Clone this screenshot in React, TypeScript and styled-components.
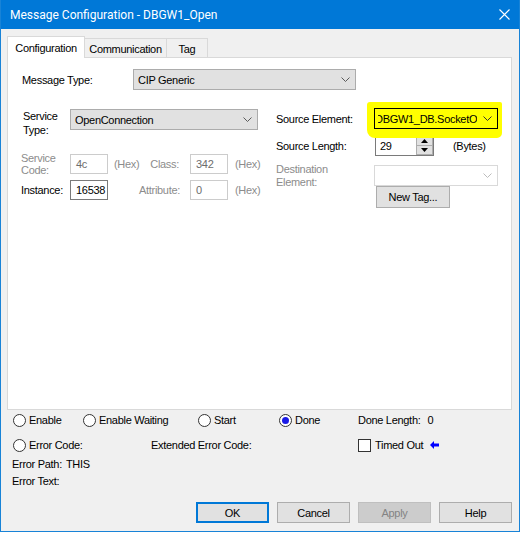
import React from "react"
import styled, { createGlobalStyle } from "styled-components"

const GlobalStyle = createGlobalStyle`
  html, body {
    margin: 0;
    padding: 0;
    background: #ffffff;
  }
  body {
    font-family: "Liberation Sans", Arial, sans-serif;
    font-size: 11px;
    letter-spacing: -0.3px;
    color: #000;
  }
  * {
    box-sizing: border-box;
  }
`

const Chevron = ({ color = "#5a5a5a" }: { color?: string }) => (
  <svg width="9" height="5" viewBox="0 0 9 5">
    <polyline points="0.5,0.5 4.5,4.5 8.5,0.5" fill="none" stroke={color} strokeWidth="1" />
  </svg>
)

export default function App() {
  return (
    <>
      <GlobalStyle />
      <Window>
        <TitleBar>
          <TitleText>Message Configuration - DBGW1_Open</TitleText>
          <CloseBox>
            <svg width="11" height="11" viewBox="0 0 11 11">
              <path d="M0.5 0.5 L10.5 10.5 M10.5 0.5 L0.5 10.5" stroke="#fff" strokeWidth="1.1" />
            </svg>
          </CloseBox>
        </TitleBar>

        <Body>
          <TabStrip>
            <Tab $active $width={78}>Configuration</Tab>
            <Tab $width={83}>Communication</Tab>
            <Tab $width={42}>Tag</Tab>
          </TabStrip>

          <Panel>
            <MessageTypeRow>
              <Label $width={111}>Message Type:</Label>
              <ComboBox $width={223}>
                <ComboText>CIP Generic</ComboText>
                <Chevron />
              </ComboBox>
            </MessageTypeRow>

            <Columns>
              <LeftColumn>
                <ServiceTypeRow>
                  <StackLabel $lineHeight={14}>
                    Service
                    <br />
                    Type:
                  </StackLabel>
                  <ComboBox $width={188}>
                    <ComboText>OpenConnection</ComboText>
                    <Chevron />
                  </ComboBox>
                </ServiceTypeRow>

                <CodeGrid $marginTop={15}>
                  <StackLabel $lineHeight={12} $disabled>
                    Service
                    <br />
                    Code:
                  </StackLabel>
                  <TextBox $disabled>4c</TextBox>
                  <Between>
                    <Muted>(Hex)</Muted>
                    <Muted>Class:</Muted>
                  </Between>
                  <TextBox $disabled>342</TextBox>
                  <Muted $pad={7}>(Hex)</Muted>
                </CodeGrid>

                <CodeGrid $marginTop={4}>
                  <Label>Instance:</Label>
                  <TextBox>16538</TextBox>
                  <Between>
                    <Muted $pad={25}>Attribute:</Muted>
                  </Between>
                  <TextBox $disabled>0</TextBox>
                  <Muted $pad={7}>(Hex)</Muted>
                </CodeGrid>
              </LeftColumn>

              <RightColumn>
                <RightRow>
                  <Label>Source Element:</Label>
                  <Highlight>
                    <ComboBox $width={124} $variant="marked">
                      <ClippedText>
                        <span>DBGW1_DB.SocketOpen</span>
                      </ClippedText>
                      <Chevron color="#333" />
                    </ComboBox>
                  </Highlight>
                </RightRow>

                <RightRow $marginTop={6}>
                  <Label>Source Length:</Label>
                  <SpinRow>
                    <Spinner>
                      <SpinValue>29</SpinValue>
                      <SpinButtons>
                        <SpinButton>
                          <svg width="7" height="4" viewBox="0 0 7 4">
                            <polygon points="0,4 3.5,0 7,4" fill="#000" />
                          </svg>
                        </SpinButton>
                        <SpinButton>
                          <svg width="7" height="4" viewBox="0 0 7 4">
                            <polygon points="0,0 3.5,4 7,0" fill="#000" />
                          </svg>
                        </SpinButton>
                      </SpinButtons>
                    </Spinner>
                    <Unit>(Bytes)</Unit>
                  </SpinRow>
                </RightRow>

                <RightRow $marginTop={6}>
                  <StackLabel $lineHeight={13} $disabled $offset={1}>
                    Destination
                    <br />
                    Element:
                  </StackLabel>
                  <ComboBox $width={124} $variant="disabled">
                    <ComboText />
                    <Chevron color="#bcbcbc" />
                  </ComboBox>
                </RightRow>

                <NewTagButton>New Tag...</NewTagButton>
              </RightColumn>
            </Columns>
          </Panel>

          <StatusGrid>
            <Radio>
              <RadioCircle />
              Enable
            </Radio>
            <Radio $col="2 / span 2">
              <RadioCircle />
              Enable Waiting
            </Radio>
            <Radio>
              <RadioCircle />
              Start
            </Radio>
            <Radio>
              <RadioCircle $checked />
              Done
            </Radio>
            <Radio>
              Done Length:<Value>0</Value>
            </Radio>

            <Radio $col="1 / span 2">
              <RadioCircle />
              Error Code:
            </Radio>
            <Radio $col="3 / span 3">Extended Error Code:</Radio>
            <Radio>
              <CheckBox />
              Timed Out
              <Arrow>
                <svg width="9" height="8" viewBox="0 0 9 8">
                  <polygon points="0,4 4,0 4,2.5 9,2.5 9,5.5 4,5.5 4,8" fill="#0000ff" />
                </svg>
              </Arrow>
            </Radio>
          </StatusGrid>

          <ErrorBlock>
            <ErrorLine>
              Error Path:<Value>THIS</Value>
            </ErrorLine>
            <ErrorLine>Error Text:</ErrorLine>
          </ErrorBlock>

          <ButtonRow>
            <DialogButton $variant="default">OK</DialogButton>
            <DialogButton>Cancel</DialogButton>
            <DialogButton $variant="disabled">Apply</DialogButton>
            <DialogButton>Help</DialogButton>
          </ButtonRow>
        </Body>
      </Window>
    </>
  )
}

const Window = styled.div`
  width: 520px;
  height: 532px;
  border: 1px solid #1883d7;
  border-top: none;
  background: #f0f0f0;
  display: flex;
  flex-direction: column;
  box-shadow: 0 1px 0 #6b6b6b, 0 2px 0 #b0b0b0;
`

const TitleBar = styled.div`
  height: 29px;
  flex: none;
  background: #0078d7;
  display: flex;
  align-items: center;
  padding-left: 9px;
`

const TitleText = styled.span`
  font-family: "Segoe UI", Roboto, sans-serif;
  font-size: 12px;
  letter-spacing: 0;
  color: #fff;
`

const CloseBox = styled.div`
  margin-left: auto;
  width: 29px;
  height: 29px;
  display: flex;
  align-items: center;
  justify-content: center;
`

const Body = styled.div`
  flex: 1;
  display: flex;
  flex-direction: column;
  padding: 7px 7px 0 6px;
`

const TabStrip = styled.div`
  display: flex;
  align-items: flex-end;
  height: 22px;
  margin-bottom: -1px;
`

const Tab = styled.div<{ $active?: boolean; $width: number }>`
  width: ${(p) => p.$width}px;
  height: ${(p) => (p.$active ? 22 : 20)}px;
  margin-left: ${(p) => (p.$active ? 0 : -1)}px;
  border: 1px solid #d9d9d9;
  border-bottom: none;
  background: ${(p) => (p.$active ? "#fff" : "#f0f0f0")};
  position: relative;
  z-index: ${(p) => (p.$active ? 2 : 0)};
  display: flex;
  align-items: center;
  justify-content: center;
  padding-top: ${(p) => (p.$active ? 0 : 1)}px;
`

const Panel = styled.div`
  position: relative;
  height: 353px;
  flex: none;
  background: #fff;
  border: 1px solid #d9d9d9;
`

const MessageTypeRow = styled.div`
  display: flex;
  align-items: center;
  margin: 11px 0 0 14px;
`

const Label = styled.span<{ $width?: number }>`
  ${(p) => (p.$width ? `width: ${p.$width}px;` : "")}
  white-space: nowrap;
  display: flex;
  align-items: center;
`

const StackLabel = styled.span<{ $lineHeight: number; $disabled?: boolean; $offset?: number }>`
  line-height: ${(p) => p.$lineHeight}px;
  color: ${(p) => (p.$disabled ? "#8c8c8c" : "#000")};
  padding-top: ${(p) => p.$offset || 0}px;
  align-self: start;
  white-space: nowrap;
`

const ComboBox = styled.div<{ $width: number; $variant?: "normal" | "marked" | "disabled" }>`
  width: ${(p) => p.$width}px;
  height: 21px;
  flex: none;
  display: flex;
  align-items: center;
  padding: 0 5px 0 4px;
  position: relative;
  z-index: 1;
  background: ${(p) =>
    p.$variant === "marked" ? "#ffff00" : p.$variant === "disabled" ? "#fff" : "#e1e1e1"};
  border: 1px solid
    ${(p) => (p.$variant === "marked" ? "#000" : p.$variant === "disabled" ? "#d9d9d9" : "#acacac")};
`

const ComboText = styled.span`
  flex: 1;
  white-space: nowrap;
`

const ClippedText = styled.span`
  flex: 1;
  overflow: hidden;
  white-space: nowrap;
  margin: 0 6px 0 -1px;

  span {
    margin-left: -3px;
  }
`

const Highlight = styled.div`
  position: relative;

  &::before {
    content: "";
    position: absolute;
    top: -6px;
    right: -4px;
    bottom: -9px;
    left: -7px;
    background: #ffff00;
    border-radius: 3px 2px 5px 8px;
  }
`

const Columns = styled.div`
  display: flex;
  margin-top: 18px;
  padding-left: 13px;
`

const LeftColumn = styled.div`
  width: 255px;
  padding-top: 1px;
`

const ServiceTypeRow = styled.div`
  display: grid;
  grid-template-columns: 49px auto;
  height: 28px;

  ${StackLabel} {
    padding-left: 2px;
  }
`

const CodeGrid = styled.div<{ $marginTop: number }>`
  display: grid;
  grid-template-columns: 49px 38px 82px 38px auto;
  align-items: center;
  margin-top: ${(p) => p.$marginTop}px;
  min-height: 20px;
`

const TextBox = styled.div<{ $disabled?: boolean }>`
  height: 20px;
  display: flex;
  align-items: center;
  padding-left: 5px;
  background: #fff;
  border: 1px solid ${(p) => (p.$disabled ? "#cccccc" : "#7a7a7a")};
  color: ${(p) => (p.$disabled ? "#6d6d6d" : "#000")};
`

const Between = styled.div`
  display: flex;
  justify-content: space-between;
  padding: 0 11px 0 6px;
`

const Muted = styled.span<{ $pad?: number }>`
  color: #8c8c8c;
  padding-left: ${(p) => p.$pad || 0}px;
  white-space: nowrap;
`

const RightColumn = styled.div`
  display: flex;
  flex-direction: column;
`

const RightRow = styled.div<{ $marginTop?: number }>`
  display: grid;
  grid-template-columns: 98px auto;
  align-items: center;
  height: 21px;
  margin-top: ${(p) => p.$marginTop || 0}px;
`

const SpinRow = styled.div`
  display: flex;
  align-items: center;
  padding-left: 1px;
`

const Spinner = styled.div`
  width: 59px;
  height: 20px;
  display: flex;
  border: 1px solid #7a7a7a;
  background: #fff;
`

const SpinValue = styled.span`
  flex: 1;
  display: flex;
  align-items: center;
  padding-left: 4px;
`

const SpinButtons = styled.div`
  width: 17px;
  display: flex;
  flex-direction: column;
`

const SpinButton = styled.div`
  flex: 1;
  display: flex;
  align-items: center;
  justify-content: center;
  background: #e1e1e1;
  border: 1px solid #adadad;
  & + & {
    border-top: none;
  }
`

const Unit = styled.span`
  margin-left: 19px;
`

const NewTagButton = styled.div`
  width: 74px;
  height: 22px;
  margin: 3px 0 0 100px;
  display: flex;
  align-items: center;
  justify-content: center;
  background: #e1e1e1;
  border: 1px solid #adadad;
`

const StatusGrid = styled.div`
  display: grid;
  grid-template-columns: 70px 68px 47px 81px 79px auto;
  grid-auto-rows: 14px;
  row-gap: 11px;
  margin: 3px 0 0 6px;
`

const Radio = styled.div<{ $col?: string }>`
  display: flex;
  align-items: center;
  gap: 3px;
  white-space: nowrap;
  ${(p) => (p.$col ? `grid-column: ${p.$col};` : "")}
`

const RadioCircle = styled.span<{ $checked?: boolean }>`
  width: 13px;
  height: 13px;
  flex: none;
  border-radius: 50%;
  border: 1px solid #333;
  background: #fff;
  display: flex;
  align-items: center;
  justify-content: center;

  &::after {
    content: "";
    width: 7px;
    height: 7px;
    border-radius: 50%;
    background: ${(p) => (p.$checked ? "#1a1ae6" : "transparent")};
  }
`

const CheckBox = styled.span`
  width: 13px;
  height: 13px;
  flex: none;
  border: 1px solid #333;
  background: #fff;
  margin-right: 1px;
`

const Arrow = styled.span`
  display: flex;
  margin-left: 4px;
`

const Value = styled.span`
  margin-left: 4px;
`

const ErrorBlock = styled.div`
  margin: 3px 0 0 5px;
`

const ErrorLine = styled.div`
  height: 17px;
  display: flex;
  align-items: center;
`

const ButtonRow = styled.div`
  display: flex;
  justify-content: flex-end;
  gap: 8px;
  margin-top: 13px;
`

const DialogButton = styled.div<{ $variant?: "normal" | "default" | "disabled" }>`
  width: 73px;
  height: 21px;
  display: flex;
  align-items: center;
  justify-content: center;
  background: ${(p) => (p.$variant === "disabled" ? "#cccccc" : "#e1e1e1")};
  border: ${(p) =>
    p.$variant === "default"
      ? "2px solid #0078d7"
      : p.$variant === "disabled"
        ? "1px solid #bfbfbf"
        : "1px solid #adadad"};
  color: ${(p) => (p.$variant === "disabled" ? "#838383" : "#000")};
`
